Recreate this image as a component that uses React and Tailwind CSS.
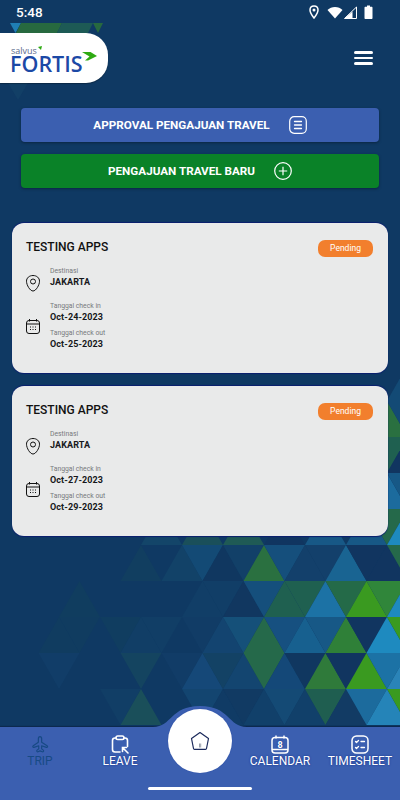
import React from 'react';

const BASE = '#0f3963';

// triangle mosaic behind the page: [row, column, colour]
const TILES = [
  [-5, 7, '#134a75'],
  [-4, 6, '#2a7040'], [-4, 7, '#134a75'],
  [-3, 6, '#1f6050'], [-3, 7, '#113560'],
  [-2, 6, '#1c6b9d'], [-2, 7, '#175886'],
  [-1, -5, '#134569'], [-1, -3, '#1a4f5a'], [-1, -1, '#1f5a55'], [-1, 1, '#103560'], [-1, 3, '#175886'], [-1, 5, '#175886'], [-1, 6, '#25694a'], [-1, 7, '#1e8abf'],
  [0, -6, '#113e60'], [0, -4, '#124268'], [0, -3, '#134a75'], [0, -2, '#103760'], [0, -1, '#124068'], [0, 0, '#2a7040'], [0, 1, '#154f7c'], [0, 2, '#13406b'], [0, 3, '#13406b'], [0, 4, '#196492'], [0, 5, '#113560'], [0, 6, '#113560'], [0, 7, '#25694a'],
  [1, -9, '#103d5f'], [1, -3, '#113e67'], [1, -2, '#113e67'], [1, -1, '#113760'], [1, 0, '#154f7c'], [1, 1, '#1f6050'], [1, 2, '#1f6050'], [1, 3, '#1c72a5'], [1, 4, '#246a48'], [1, 5, '#3a9a20'], [1, 6, '#30863a'], [1, 7, '#1e8abf'],
  [2, -10, '#103c60'], [2, -9, '#103c60'], [2, -7, '#103d60'], [2, -6, '#113e66'], [2, -5, '#113e66'], [2, -3, '#113c66'], [2, -2, '#134470'], [2, -1, '#155079'], [2, 0, '#25694a'], [2, 1, '#165080'], [2, 2, '#17608f'], [2, 3, '#175886'], [2, 4, '#2f8038'], [2, 5, '#113560'], [2, 6, '#1e8abf'], [2, 7, '#3a9a20'],
  [3, -10, '#113d68'], [3, -6, '#144460'], [3, -4, '#113c67'], [3, -3, '#154878'], [3, -2, '#134265'], [3, -1, '#134570'], [3, 0, '#25694a'], [3, 1, '#144878'], [3, 2, '#103760'], [3, 3, '#2f7a3a'], [3, 4, '#113560'], [3, 5, '#3a9a20'], [3, 6, '#1c72a5'], [3, 7, '#2a84b8'],
  [4, -7, '#113e66'], [4, -6, '#1a4f5a'], [4, -3, '#134570'], [4, -2, '#103b65'], [4, -1, '#113a63'], [4, 0, '#11406a'], [4, 1, '#144a75'], [4, 2, '#11406a'], [4, 3, '#1f5e50'], [4, 4, '#123b64'], [4, 5, '#1c6b9d'], [4, 6, '#2584b8'], [4, 7, '#3a9a20'],
];

const tilePoints = (row, col) => {
  const x = 264 + col * 20.5;
  const top = 545 + row * 36;
  const bottom = top + 36;
  const pointsUp = (row + col + 1000) % 2 === 0;
  return pointsUp
    ? `${x},${top} ${x - 20.5},${bottom} ${x + 20.5},${bottom}`
    : `${x - 20.5},${top} ${x + 20.5},${top} ${x},${bottom}`;
};

const Mosaic = () => (
  <svg className="absolute inset-0" width="400" height="800" viewBox="0 0 400 800">
    {TILES.map(([row, col, fill]) => (
      <polygon key={`${row}-${col}`} points={tilePoints(row, col)} fill={fill} />
    ))}
    {/* bit of the top pattern that peeks out round the logo */}
    <polygon points="10,23 21,23 15.5,33" fill="#1f7fb5" />
    <polygon points="21,23 62,23 57,33 16,33" fill="#27693f" />
    <polygon points="62,23 93,23 88,33 57,33" fill="#1d5a55" />
    <polygon points="93,23 103,23 98,33" fill="#27693f" />
    <polygon points="8,83 28,83 18,100" fill="#123f66" />
  </svg>
);

const StatusBar = () => (
  <div className="h-[33px] flex justify-between pl-4 pr-[27px] pt-[4px] text-white">
    <span className="text-[13.500px] leading-[16px] font-medium">5:48</span>
    <div className="flex items-start gap-[5px] pt-[1px]">
      <svg width="10" height="14" viewBox="0 0 10 14" className="mr-[3px]">
        <path d="M5 1C2.600 1 1 2.800 1 5c0 3 4 8 4 8s4-5 4-8c0-2.200-1.600-4-4-4z" fill="none" stroke="#fff" strokeWidth="1.500" />
        <circle cx="5" cy="5" r="1.500" fill="#fff" />
      </svg>
      <svg width="16" height="14" viewBox="0 0 16 14" className="-mr-[4px] mt-[1px]">
        <path d="M0.500 4C2.500 2 5 1 8 1s5.500 1 7.500 3L8 12.500z" fill="#fff" />
      </svg>
      <svg width="13" height="14" viewBox="0 0 13 14" className="mt-[1px]">
        <path d="M12.500 1v11.500H0.500z" fill="none" stroke="#fff" strokeWidth="1" />
        <path d="M8.500 5.500v7H0.500z" fill="#fff" />
      </svg>
      <svg width="9" height="14" viewBox="0 0 9 14" className="ml-[2px]">
        <path d="M3 0.500h3v1.200h1.500c.6 0 1 .4 1 1V13c0 .6-.4 1-1 1h-6c-.6 0-1-.4-1-1V2.700c0-.6.4-1 1-1H3z" fill="#fff" />
      </svg>
    </div>
  </div>
);

const Logo = () => (
  <div className="w-[108px] h-[50px] bg-white rounded-r-[22px] pl-[11px] pt-[13px] relative shadow-[0_1px_1px_rgba(0,0,0,0.3)]">
    <div className="text-[9px] leading-[9px] text-[#5c6b8c] font-['Open_Sans',sans-serif]">salvus</div>
    <div className="text-[21.500px] leading-[18px] font-semibold text-[#1c49a6] -ml-[1px] font-['Open_Sans',sans-serif]">FORTIS</div>
    <svg width="15" height="9" viewBox="0 0 15 9" className="absolute left-[82px] top-[19px]">
      <path d="M0 0h8.500L15 4 6 8.500 3 8.500 7.500 4.500z" fill="#2eaa12" />
    </svg>
    <svg width="4" height="4" viewBox="0 0 4 4" className="absolute left-[38px] top-[13px]">
      <path d="M0 1L4 0 3 4z" fill="#2eaa12" />
    </svg>
  </div>
);

const Header = () => (
  <div className="flex items-center justify-between pr-[27px]">
    <Logo />
    <div className="flex flex-col gap-[3px]">
      <div className="w-[19px] h-[2.500px] bg-white rounded-full" />
      <div className="w-[19px] h-[2.500px] bg-white rounded-full" />
      <div className="w-[19px] h-[2.500px] bg-white rounded-full" />
    </div>
  </div>
);

const ActionButton = ({ label, color, icon }) => (
  <button className={`h-[34px] w-full rounded-[4px] ${color} flex items-center justify-center gap-[19px] text-white text-[11.700px] font-bold shadow-[0_1px_3px_rgba(0,0,0,0.35)]`}>
    <span className="pt-[2px]">{label}</span>
    {icon}
  </button>
);

const PinIcon = () => (
  <svg width="16" height="18" viewBox="0 0 16 18" fill="none" stroke="#111" strokeWidth="1">
    <path d="M8 1.500C4.200 1.500 1.500 4 1.500 7.200 1.500 11 5 17 8 17s6.500-6 6.500-9.800C14.500 4 11.800 1.500 8 1.500z" />
    <circle cx="8" cy="7.500" r="2.500" />
  </svg>
);

const CalendarIcon = () => (
  <svg width="16" height="17" viewBox="0 0 16 17" fill="none" stroke="#111" strokeWidth="1">
    <rect x="1.500" y="2.500" width="13" height="13" rx="2.500" />
    <path d="M1.500 6h13M4.500 1v2.500M11.500 1v2.500" />
    <path d="M5 9h1M7.500 9h1M10 9h1M5 11.500h1M7.500 11.500h1M10 11.500h1" strokeWidth="1.200" />
  </svg>
);

const Field = ({ label, value, className = '' }) => (
  <div className={className}>
    <div className="text-[6.800px] leading-[9px] text-[#77797c]">{label}</div>
    <div className="text-[9px] leading-[11px] mt-[1px] font-bold text-[#16181a] tracking-[0.1px]">{value}</div>
  </div>
);

const TripCard = ({ title, destination, checkIn, checkOut }) => (
  <div className="h-[150px] rounded-[12px] bg-[#e9eaea] pl-[14px] pr-[15px] pt-[17px] shadow-[0_-1px_1px_#0a1f6e,0_1px_1px_#0a1f6e]">
    <div className="flex justify-between items-start">
      <div className="text-[12px] leading-[14px] font-medium text-[#111]">{title}</div>
      <div className="w-[55px] h-[17px] rounded-[7px] bg-[#f27f2d] text-white text-[8.500px] flex items-center justify-center">Pending</div>
    </div>
    <div className="flex items-start mt-[10px]">
      <div className="w-[24px] h-[21px] -ml-[1px] mr-[1px] pt-[7px]"><PinIcon /></div>
      <Field label="Destinasi" value={destination} />
    </div>
    <div className="flex items-center mt-[14px]">
      <div className="w-[24px] -ml-[1px] mr-[1px] pt-[1px]"><CalendarIcon /></div>
      <div>
        <Field label="Tanggal check in" value={checkIn} />
        <Field label="Tanggal check out" value={checkOut} className="mt-[6px]" />
      </div>
    </div>
  </div>
);

const PlaneIcon = () => (
  <svg width="18" height="19" viewBox="0 0 24 24" fill="none" stroke="#174a85" strokeWidth="1.600" strokeLinejoin="round">
    <path d="M12 1.500c1.300 0 2.200 1.700 2.200 3.300v4.200l7.300 4.700c.6.4.8 1 .5 1.600-.3.500-.9.700-1.500.5l-6.300-2.100v4.100l2.200 1.700c.7.600.6 1.900-.3 2.200-.4.100-.7 0-1-.1L12 20.500l-2.600 1.100c-.3.100-.6.200-1 .1-.9-.3-1-1.600-.3-2.200l2.200-1.700v-4.100l-6.300 2.100c-.6.200-1.200 0-1.500-.5-.3-.6-.1-1.200.5-1.600L9.800 9V4.800c0-1.600.9-3.300 2.200-3.300z" />
  </svg>
);

const LeaveIcon = () => (
  <svg width="18" height="19" viewBox="0 0 18 19" fill="none" stroke="#fff" strokeWidth="1.600" strokeLinecap="round">
    <path d="M5 3H4C2.500 3 1.500 4 1.500 5.500v9C1.500 16 2.500 17 4 17h5M13 3h1c1.500 0 2.500 1 2.500 2.500v6" />
    <rect x="5" y="1" width="8" height="3.500" rx="1.700" />
    <path d="M17 18l-5-5M11.500 16.500v-4h4" />
  </svg>
);

const CalendarNavIcon = () => (
  <svg width="18" height="19" viewBox="0 0 18 19" fill="none" stroke="#fff" strokeWidth="1.500">
    <rect x="1" y="2.500" width="16" height="15.500" rx="3" />
    <path d="M1 14.500h16M5 0.500v3M13 0.500v3" />
    <text x="9" y="12.500" textAnchor="middle" fontSize="9" fontWeight="700" fill="#fff" stroke="none">8</text>
  </svg>
);

const TimesheetIcon = () => (
  <svg width="18" height="19" viewBox="0 0 18 19" fill="none" stroke="#fff" strokeWidth="1.500" strokeLinecap="round" strokeLinejoin="round">
    <rect x="1" y="1" width="16" height="17" rx="4.500" />
    <path d="M4.500 6.500l1 1 2-2M10 6.500h3.500M4.500 12.500l1 1 2-2M10 12.500h3.500" strokeWidth="1.300" />
  </svg>
);

const NavItem = ({ icon, label, muted }) => (
  <div className={`flex flex-col items-center text-[12px] leading-[14px] ${muted ? 'text-[#174a85]' : 'text-white [text-shadow:0_0_2px_#0b2a8a]'}`}>
    {icon}
    <span>{label}</span>
  </div>
);

const BottomNav = () => (
  <div className="mt-auto h-[73px] bg-[#3b5fb0] relative shadow-[0_-1px_1px_rgba(10,25,60,0.5)]">
    {/* bump behind the home button */}
    <svg className="absolute left-[150px] -top-[22px]" width="100" height="24" viewBox="0 0 100 24">
      <path d="M3 22C22 22 20 1 50 1s28 21 47 21v2H3z" fill="#3b5fb0" />
    </svg>
    <div className="absolute left-[168px] -top-[18px] w-[64px] h-[64px] rounded-full bg-white flex items-center justify-center shadow-[0_0_1px_#1c3f9e]">
      <svg width="20" height="20" viewBox="0 0 20 20" fill="none" stroke="#1b2a5c" strokeWidth="1.200" strokeLinejoin="round">
        <path d="M10 1.500L18.500 7.500 16.500 17.500C16.400 18 16 18.300 15.500 18.300H4.500C4 18.300 3.600 18 3.500 17.500L1.500 7.500z" />
        <path d="M9.500 12.500v4M10.700 12.500v4" stroke="#9aa0ac" strokeWidth="1" />
      </svg>
    </div>
    <div className="grid grid-cols-5 pt-[8px]">
      <NavItem muted icon={<PlaneIcon />} label="TRIP" />
      <NavItem icon={<LeaveIcon />} label="LEAVE" />
      <div />
      <NavItem icon={<CalendarNavIcon />} label="CALENDAR" />
      <NavItem icon={<TimesheetIcon />} label="TIMESHEET" />
    </div>
    <div className="absolute left-[148px] bottom-[10px] w-[104px] h-[3.500px] rounded-full bg-white" />
  </div>
);

export default function App() {
  return (
    <div className="relative w-[400px] h-[800px] overflow-hidden font-['Roboto',sans-serif]" style={{ backgroundColor: BASE }}>
      <Mosaic />
      <div className="relative h-full flex flex-col">
        <StatusBar />
        <Header />

        {/* Actions */}
        <div className="flex flex-col gap-[12px] px-[21px] mt-[25px]">
          <ActionButton
            label="APPROVAL PENGAJUAN TRAVEL"
            color="bg-[#3b5fb0]"
            icon={
              <svg width="18" height="18" viewBox="0 0 18 18" fill="none" stroke="#fff" strokeWidth="1.200" strokeLinecap="round">
                <rect x="0.700" y="0.700" width="16.600" height="16.600" rx="4.500" />
                <path d="M5.500 5.500h7M5.500 9h7M5.500 12.500h7" strokeWidth="1.300" />
              </svg>
            }
          />
          <ActionButton
            label="PENGAJUAN TRAVEL BARU"
            color="bg-[#0a8228]"
            icon={
              <svg width="18" height="18" viewBox="0 0 18 18" fill="none" stroke="#fff" strokeWidth="1.200">
                <circle cx="9" cy="9" r="8.300" />
                <path d="M9 4.800v8.400M4.800 9h8.400" />
              </svg>
            }
          />
        </div>

        {/* Trips */}
        <div className="flex flex-col gap-[13px] px-[12px] mt-[35px]">
          <TripCard title="TESTING APPS" destination="JAKARTA" checkIn="Oct-24-2023" checkOut="Oct-25-2023" />
          <TripCard title="TESTING APPS" destination="JAKARTA" checkIn="Oct-27-2023" checkOut="Oct-29-2023" />
        </div>

        <BottomNav />
      </div>
    </div>
  );
}
